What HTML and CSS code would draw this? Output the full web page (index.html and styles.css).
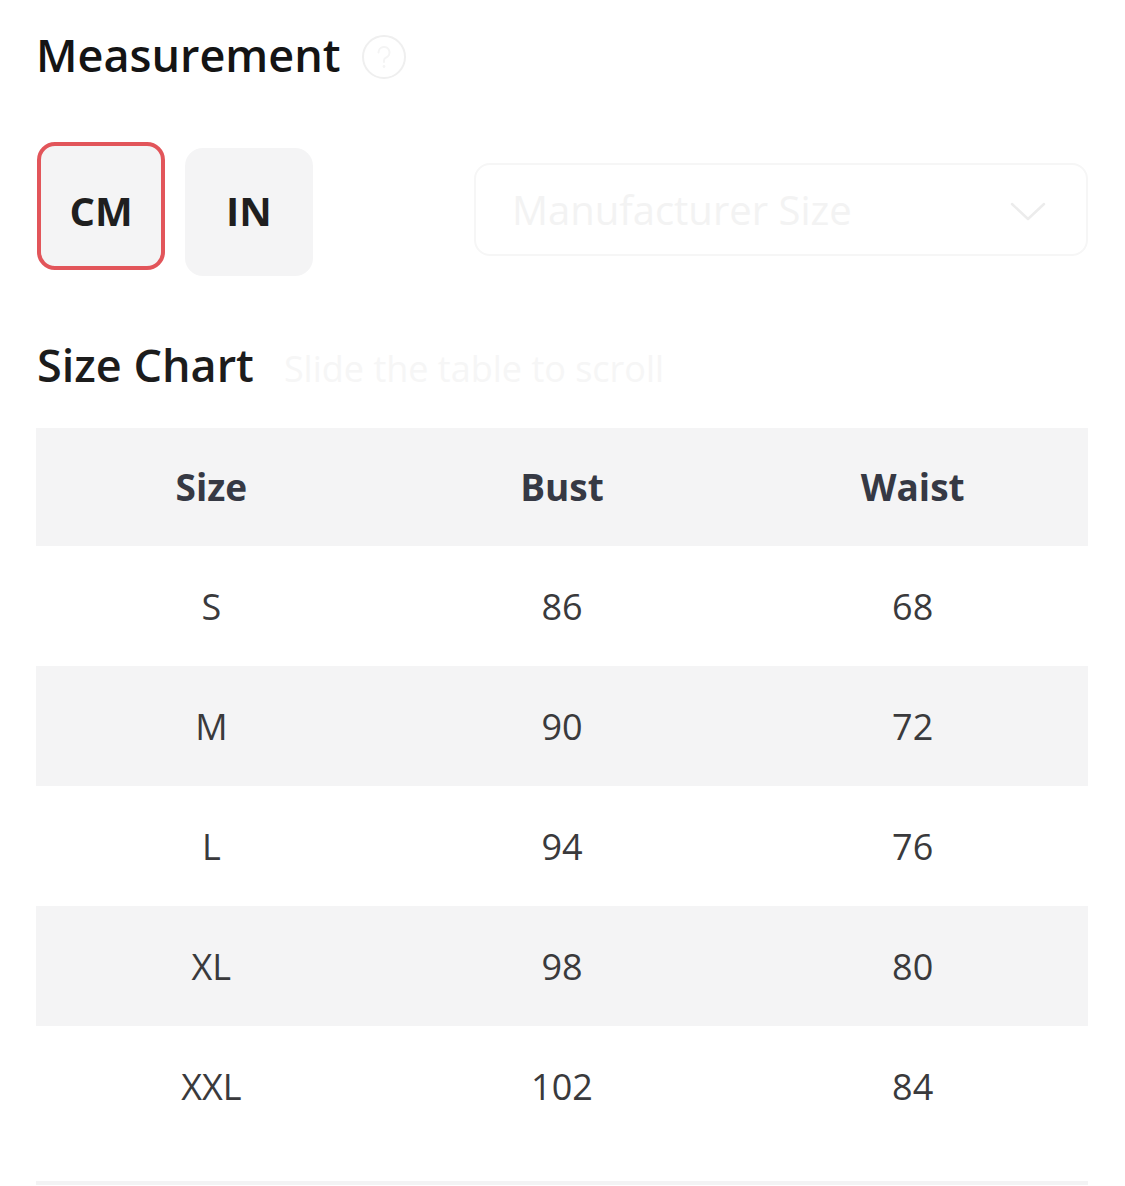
FILE: index.html
```html
<!DOCTYPE html>
<html lang="en">
<head>
<meta charset="utf-8">
<title>Measurement</title>
<link rel="stylesheet" href="styles.css">
</head>
<body>
<div class="page">
  <div class="title-row">
    <h2 class="title">Measurement</h2>
    <svg class="info" width="46" height="46" viewBox="0 0 46 46" aria-hidden="true">
      <circle cx="23" cy="23" r="21" fill="none" stroke="#efefef" stroke-width="2"/>
      <path d="M17.5 18.5a5.5 5.5 0 1 1 7.5 5.1c-1.3.6-2 1.5-2 2.9v1.5" fill="none" stroke="#f4f4f4" stroke-width="2" stroke-linecap="round"/>
      <circle cx="23" cy="32.5" r="1.4" fill="#f4f4f4"/>
    </svg>
  </div>

  <div class="unit-row">
    <button class="unit unit-active">CM</button>
    <button class="unit unit-in">IN</button>
    <div class="select">
      <span class="select-text">Manufacturer Size</span>
      <svg class="chevron" width="40" height="24" viewBox="0 0 40 24" aria-hidden="true">
        <path d="M4 5l16 15L36 5" fill="none" stroke="#ececec" stroke-width="2.5" stroke-linecap="round" stroke-linejoin="round"/>
      </svg>
    </div>
  </div>

  <div class="chart-row">
    <h2 class="title">Size Chart</h2>
    <span class="hint">Slide the table to scroll</span>
  </div>

  <div class="table">
    <div class="tr th"><div class="td">Size</div><div class="td">Bust</div><div class="td">Waist</div></div>
    <div class="tr"><div class="td">S</div><div class="td">86</div><div class="td">68</div></div>
    <div class="tr alt"><div class="td">M</div><div class="td">90</div><div class="td">72</div></div>
    <div class="tr"><div class="td">L</div><div class="td">94</div><div class="td">76</div></div>
    <div class="tr alt"><div class="td">XL</div><div class="td">98</div><div class="td">80</div></div>
    <div class="tr"><div class="td">XXL</div><div class="td">102</div><div class="td">84</div></div>
  </div>
  <div class="bottom-line"></div>
</div>
</body>
</html>
```

FILE: styles.css
```css
html, body {
  margin: 0;
  padding: 0;
  background: #ffffff;
}

body {
  font-family: "Open Sans", "Noto Sans", "Liberation Sans", sans-serif;
  color: #1f1f1f;
}

.page {
  padding: 27px 37px 0 36px;
}

.title-row {
  display: flex;
  align-items: center;
  gap: 20px;
}

.title {
  margin: 0;
  font-size: 45px;
  line-height: 56px;
  font-weight: 600;
  color: #141414;
}

.info {
  margin-top: 4px;
}

.unit-row {
  display: flex;
  align-items: flex-start;
  margin-top: 59px;
  padding-left: 1px;
}

.unit {
  width: 128px;
  height: 128px;
  box-sizing: border-box;
  border-radius: 18px;
  background: #f4f4f5;
  border: 0;
  padding: 0;
  font-family: "Open Sans", "Noto Sans", sans-serif;
  font-weight: 700;
  font-size: 40px;
  color: #1f1f1f;
}

.unit-active {
  border: 4px solid #e2555a;
  padding-top: 8px;
}

.unit-in {
  margin-left: 20px;
  margin-top: 6px;
  padding-bottom: 4px;
}

.select {
  margin-left: auto;
  margin-top: 21px;
  width: 614px;
  height: 93px;
  box-sizing: border-box;
  border: 2px solid #f6f6f6;
  border-radius: 16px;
  display: flex;
  align-items: center;
  justify-content: space-between;
  padding: 0 38px 0 36px;
}

.select-text {
  font-size: 40px;
  color: #f3f3f3;
}

.chevron {
  margin-top: 2px;
}

.chart-row {
  display: flex;
  align-items: baseline;
  gap: 30px;
  margin-top: 61px;
  padding-left: 1px;
}

.chart-row .title {
  font-weight: 600;
  color: #1c1c1c;
}

.hint {
  font-size: 36px;
  color: #f6f6f6;
}

.table {
  margin-top: 35px;
}

.tr {
  display: grid;
  grid-template-columns: 1fr 1fr 1fr;
  height: 120px;
  align-items: center;
  text-align: center;
  font-size: 36px;
  color: #3a3a3c;
}

.th {
  height: 118px;
  background: #f4f4f5;
  font-weight: 700;
  font-size: 37px;
  color: #363944;
}

.alt {
  background: #f4f4f5;
}

.td {
  line-height: 50px;
  padding-top: 2px;
}

.th .td {
  padding-top: 0;
}

.bottom-line {
  margin-top: 35px;
  height: 4px;
  background: #f3f3f4;
}
```
